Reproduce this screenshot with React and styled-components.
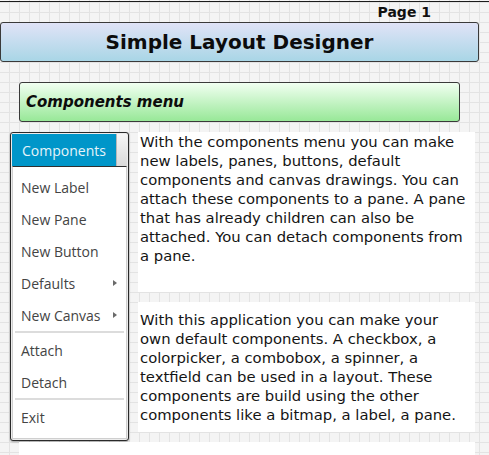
import React from "react";
import styled, { createGlobalStyle } from "styled-components";

const Global = createGlobalStyle`
  html, body { margin: 0; padding: 0; }
  body { width: 489px; height: 455px; overflow: hidden; background: #f4f4f4; }
`;

const Canvas = styled.div`
  width: 489px;
  height: 455px;
  overflow: hidden;
  display: flex;
  flex-direction: column;
  background-color: #f4f4f4;
  background-image:
    linear-gradient(to right, #e3e3e3 1px, transparent 1px),
    linear-gradient(to bottom, #e3e3e3 1px, transparent 1px);
  background-size: 10px 10px;
  background-position: 9px 2px;
  font-family: "DejaVu Sans", Verdana, sans-serif;
`;

const TopRule = styled.div`
  flex: none;
  height: 1px;
  margin-top: 1px;
  background: #1c1c1c;
`;

const PageLabel = styled.div`
  flex: none;
  height: 20px;
  line-height: 20px;
  padding-right: 58px;
  text-align: right;
  font-size: 14px;
  font-weight: bold;
  color: #111;
`;

const TitleBar = styled.div`
  flex: none;
  box-sizing: border-box;
  width: 479px;
  height: 40px;
  border: 1px solid #3a3a3a;
  border-radius: 3px;
  background: linear-gradient(to bottom, #e0e3f7, #a9d6e6);
  display: flex;
  align-items: center;
  justify-content: center;
  font-size: 20px;
  font-weight: bold;
  color: #0c0c0c;
`;

const SectionBar = styled.div`
  flex: none;
  box-sizing: border-box;
  margin: 20px 0 0 19px;
  width: 441px;
  height: 40px;
  border: 1px solid #3a3a3a;
  border-radius: 3px;
  background: linear-gradient(to bottom, #f1fff1, #98e898);
  display: flex;
  align-items: center;
  padding-left: 6px;
  font-size: 15px;
  font-weight: bold;
  font-style: italic;
  color: #0c0c0c;
`;

const Row = styled.div`
  flex: none;
  display: flex;
  align-items: flex-start;
  margin-top: 10px;
`;

const MenuFrame = styled.div`
  flex: none;
  box-sizing: border-box;
  margin-left: 10px;
  width: 119px;
  height: 309px;
  border: 1px solid #2a2a2a;
  border-radius: 3px;
  padding: 1px;
  background: #ececec;
  box-shadow: 0 1px 2px rgba(0, 0, 0, 0.35);
  display: flex;
  flex-direction: column;
  font-family: "Open Sans", "Noto Sans", sans-serif;
`;

const MenuButton = styled.div`
  flex: none;
  height: 32px;
  display: flex;
`;

const MenuButtonLabel = styled.div`
  flex: none;
  width: 104px;
  background: #0096c9;
  color: #e6f4fa;
  font-size: 14px;
  display: flex;
  align-items: center;
  justify-content: center;
`;

const MenuButtonTail = styled.div`
  flex: 1;
  background: linear-gradient(to bottom, #f6f6f6, #dadada);
  border-left: 1px solid #b8b8b8;
`;

const Popup = styled.div`
  flex: 1;
  box-sizing: border-box;
  border-top: 1px solid #2f2f2f;
  border-left: 1px solid #cfcfcf;
  border-right: 1px solid #cfcfcf;
  border-bottom: 1px solid #cfcfcf;
  background: #fff;
  padding: 4px 0;
  display: flex;
  flex-direction: column;
`;

const Item = styled.div`
  flex: none;
  height: 32px;
  padding: 0 8px 0 8px;
  display: flex;
  align-items: center;
  justify-content: space-between;
  font-size: 14px;
  color: #444;
`;

const Arrow = styled.span`
  width: 0;
  height: 0;
  border-top: 3px solid transparent;
  border-bottom: 3px solid transparent;
  border-left: 4px solid #6a6a6a;
  margin-right: 1px;
`;

const Separator = styled.div`
  flex: none;
  height: 2px;
  margin: 0 2px 1px 2px;
  background: #dcdcdc;
`;

const TextColumn = styled.div`
  flex: none;
  margin-left: 9px;
  width: 337px;
  display: flex;
  flex-direction: column;
  gap: 10px;
`;

const TextBox = styled.div`
  box-sizing: border-box;
  height: ${(p) => p.$h}px;
  background: #fff;
  padding: 0 2px;
  display: flex;
  flex-direction: column;
  justify-content: ${(p) => (p.$center ? "center" : "flex-start")};
  font-size: 14.8px;
  line-height: 19px;
  color: #141414;
`;

const Line = styled.div`
  white-space: nowrap;
`;

const BottomBox = styled.div`
  flex: none;
  margin: 1px 0 0 19px;
  width: 456px;
  height: 40px;
  background: #fff;
`;

const items = [
  { label: "New Label" },
  { label: "New Pane" },
  { label: "New Button" },
  { label: "Defaults", sub: true },
  { label: "New Canvas", sub: true },
  { sep: true },
  { label: "Attach" },
  { label: "Detach" },
  { sep: true },
  { label: "Exit" },
];

const text1 = [
  "With the components menu you can make",
  "new labels, panes, buttons, default",
  "components and canvas drawings. You can",
  "attach these components to a pane. A pane",
  "that has already children can also be",
  "attached. You can detach components from",
  "a pane.",
];

const text2 = [
  "With this application you can make your",
  "own default components. A checkbox, a",
  "colorpicker, a combobox, a spinner, a",
  "textfield can be used in a layout. These",
  "components are build using the other",
  "components like a bitmap, a label, a pane.",
];

export default function App() {
  return (
    <>
      <Global />
      <Canvas>
        <TopRule />
        <PageLabel>Page 1</PageLabel>
        <TitleBar>Simple Layout Designer</TitleBar>
        <SectionBar>Components menu</SectionBar>
        <Row>
          <MenuFrame>
            <MenuButton>
              <MenuButtonLabel>Components</MenuButtonLabel>
              <MenuButtonTail />
            </MenuButton>
            <Popup>
              {items.map((it, i) =>
                it.sep ? (
                  <Separator key={i} />
                ) : (
                  <Item key={i}>
                    <span>{it.label}</span>
                    {it.sub && <Arrow />}
                  </Item>
                )
              )}
            </Popup>
          </MenuFrame>
          <TextColumn>
            <TextBox $h={160}>
              {text1.map((l, i) => (
                <Line key={i}>{l}</Line>
              ))}
            </TextBox>
            <TextBox $h={130} $center>
              {text2.map((l, i) => (
                <Line key={i}>{l}</Line>
              ))}
            </TextBox>
          </TextColumn>
        </Row>
        <BottomBox />
      </Canvas>
    </>
  );
}
